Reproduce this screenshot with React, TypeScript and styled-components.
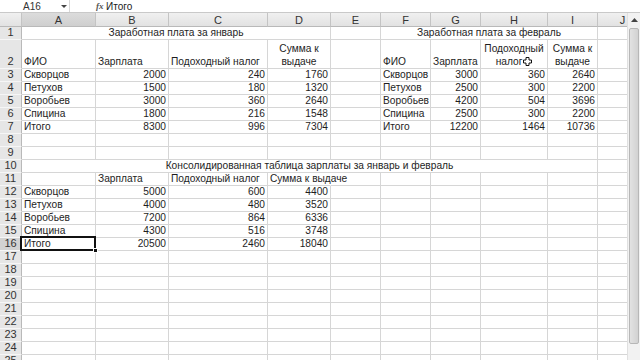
import React from "react";
import styled, { createGlobalStyle, css } from "styled-components";

const Global = createGlobalStyle`
  html, body { margin: 0; padding: 0; background: #fff; }
  body { width: 640px; height: 360px; overflow: hidden; font-family: "Liberation Sans", Arial, sans-serif; }
`;

const COLS = [22, 74, 73, 99, 63, 50, 50, 50, 67, 50, 50];
const LETTERS = ["A", "B", "C", "D", "E", "F", "G", "H", "I", "J"];

type Align = "left" | "right" | "center";
type Cell = { c: number; span?: number; t: string; a?: Align; wrap?: boolean; over?: boolean };

const Window = styled.div`
  width: 640px;
  height: 360px;
  display: flex;
  flex-direction: column;
  overflow: hidden;
  background: #fff;
`;

const FormulaBar = styled.div`
  height: 12px;
  display: flex;
  align-items: center;
  border-bottom: 1px solid #c9c9c9;
  background: #fff;
  font-size: 10px;
  color: #333;
  flex: none;
`;

const NameBox = styled.div`
  width: 70px;
  height: 100%;
  display: flex;
  align-items: center;
  padding-left: 23px;
  box-sizing: border-box;
  position: relative;
  border-right: 1px solid #d8d8d8;
`;

const DropArrow = styled.span`
  position: absolute;
  left: 61px;
  top: 5px;
  width: 0;
  height: 0;
  border-left: 3px solid transparent;
  border-right: 3px solid transparent;
  border-top: 3px solid #444;
`;

const Fx = styled.span`
  margin-left: 26px;
  font-family: "Liberation Serif", serif;
  font-style: italic;
  font-weight: bold;
  font-size: 9px;
  color: #555;
  width: 9px;
`;

const FormulaText = styled.span`
  margin-left: 1px;
  color: #222;
`;

const Body = styled.div`
  flex: 1;
  display: flex;
  min-height: 0;
`;

const Sheet = styled.div`
  flex: 1;
  overflow: hidden;
  display: grid;
  grid-template-columns: ${COLS.map((w) => w + "px").join(" ")};
  grid-template-rows: 14px 13px 29px repeat(23, 13px);
  font-size: 10.2px;
  color: #1e1e1e;
  align-content: start;
`;

const Header = styled.div<{ $sel?: boolean }>`
  background: ${(p) => (p.$sel ? "linear-gradient(#dcdcdc, #cfcfcf)" : "linear-gradient(#f0f0f0, #e2e2e2)")};
  border-right: 1px solid #c4c4c4;
  border-bottom: 1px solid #b9b9b9;
  box-sizing: border-box;
  display: flex;
  align-items: center;
  justify-content: center;
  font-size: 11px;
  color: #333;
  white-space: nowrap;
  overflow: hidden;
`;

const RowHead = styled.div<{ $sel?: boolean }>`
  background: ${(p) => (p.$sel ? "#d2d2d2" : "#e6e6e6")};
  border-right: 1px solid #b9b9b9;
  border-bottom: 1px solid #f6f6f6;
  box-sizing: border-box;
  display: flex;
  align-items: flex-end;
  justify-content: center;
  font-size: 11px;
  line-height: 13px;
  color: #333;
  overflow: hidden;
`;

const Corner = styled(Header)`
  background: linear-gradient(#f0f0f0, #e2e2e2);
`;

const CellBox = styled.div<{ $align: Align; $wrap?: boolean; $over?: boolean; $span: number; $sel?: boolean }>`
  grid-column: span ${(p) => p.$span};
  border-right: 1px solid #d6d6d6;
  border-bottom: 1px solid #d6d6d6;
  box-sizing: border-box;
  display: flex;
  align-items: flex-end;
  justify-content: ${(p) => (p.$align === "right" ? "flex-end" : p.$align === "center" ? "center" : "flex-start")};
  text-align: ${(p) => p.$align};
  padding: 0 2px 0 2px;
  line-height: 13px;
  white-space: ${(p) => (p.$wrap ? "normal" : "nowrap")};
  overflow: ${(p) => (p.$over || p.$sel ? "visible" : "hidden")};
  position: relative;
  z-index: ${(p) => (p.$sel ? 2 : p.$over ? 1 : 0)};
  ${(p) =>
    p.$over &&
    css`
      border-right-color: transparent;
    `}
`;

const Selection = styled.div`
  position: absolute;
  left: -2px;
  top: -2px;
  right: -1px;
  bottom: -1px;
  border: 2px solid #111;
  pointer-events: none;
`;

const Handle = styled.div`
  position: absolute;
  right: -4px;
  bottom: -4px;
  width: 5px;
  height: 5px;
  background: #111;
  border: 1px solid #fff;
  box-sizing: border-box;
`;

const Cursor = styled.span`
  display: inline-block;
  width: 9px;
  height: 9px;
  margin-left: 1px;
  position: relative;
  vertical-align: -1px;
`;

const Scrollbar = styled.div`
  width: 12px;
  flex: none;
  display: flex;
  flex-direction: column;
  background: #f2f2f2;
  border-left: 1px solid #e0e0e0;
`;

const ScrollArrow = styled.div`
  height: 14px;
  display: flex;
  align-items: center;
  justify-content: center;
  flex: none;
`;

const Thumb = styled.div`
  height: 314px;
  margin: 1px 1px 0 1px;
  background: linear-gradient(90deg, #e2e2e2, #d2d2d2);
  border: 1px solid #b7b7b7;
  border-radius: 2px;
  flex: none;
`;

const rows: Cell[][] = [
  [{ c: 0, span: 4, t: "Заработная плата за январь", a: "center" }, { c: 4, t: "" }, { c: 5, span: 4, t: "Заработная плата за февраль", a: "center" }, { c: 9, t: "" }],
  [
    { c: 0, t: "ФИО" },
    { c: 1, t: "Зарплата" },
    { c: 2, t: "Подоходный налог" },
    { c: 3, t: "Сумма к выдаче", a: "center", wrap: true },
    { c: 4, t: "" },
    { c: 5, t: "ФИО" },
    { c: 6, t: "Зарплата" },
    { c: 7, t: "Подоходный налог", a: "center", wrap: true },
    { c: 8, t: "Сумма к выдаче", a: "center", wrap: true },
    { c: 9, t: "" },
  ],
];

const jan = [
  ["Скворцов", "2000", "240", "1760"],
  ["Петухов", "1500", "180", "1320"],
  ["Воробьев", "3000", "360", "2640"],
  ["Спицина", "1800", "216", "1548"],
  ["Итого", "8300", "996", "7304"],
];
const feb = [
  ["Скворцов", "3000", "360", "2640"],
  ["Петухов", "2500", "300", "2200"],
  ["Воробьев", "4200", "504", "3696"],
  ["Спицина", "2500", "300", "2200"],
  ["Итого", "12200", "1464", "10736"],
];
const cons = [
  ["Скворцов", "5000", "600", "4400"],
  ["Петухов", "4000", "480", "3520"],
  ["Воробьев", "7200", "864", "6336"],
  ["Спицина", "4300", "516", "3748"],
  ["Итого", "20500", "2460", "18040"],
];

const quad = (r: string[], start: number): Cell[] => [
  { c: start, t: r[0] },
  { c: start + 1, t: r[1], a: "right" },
  { c: start + 2, t: r[2], a: "right" },
  { c: start + 3, t: r[3], a: "right" },
];

const empty = (from: number, to: number): Cell[] => {
  const out: Cell[] = [];
  for (let i = from; i <= to; i++) out.push({ c: i, t: "" });
  return out;
};

jan.forEach((r, i) => rows.push([...quad(r, 0), { c: 4, t: "" }, ...quad(feb[i], 5), { c: 9, t: "" }]));
rows.push(empty(0, 9));
rows.push(empty(0, 9));
rows.push([{ c: 0, span: 9, t: "Консолидированная таблица зарплаты за январь и февраль", a: "center" }, { c: 9, t: "" }]);
rows.push([{ c: 0, t: "" }, { c: 1, t: "Зарплата" }, { c: 2, t: "Подоходный налог" }, { c: 3, t: "Сумма к выдаче", over: true }, ...empty(4, 9)]);
cons.forEach((r) => rows.push([...quad(r, 0), ...empty(4, 9)]));
for (let i = 0; i < 9; i++) rows.push(empty(0, 9));

const SEL_ROW = 16;

const CursorIcon = () => (
  <Cursor>
    <svg width="9" height="9" viewBox="0 0 9 9">
      <path d="M3 0.5h3v2.5h2.5v3h-2.5v2.5h-3v-2.5h-2.5v-3h2.5z" fill="#fff" stroke="#111" strokeWidth="1" />
    </svg>
  </Cursor>
);

export default function App() {
  return (
    <Window>
      <Global />
      <FormulaBar>
        <NameBox>
          A16
          <DropArrow />
        </NameBox>
        <Fx>fx</Fx>
        <FormulaText>Итого</FormulaText>
      </FormulaBar>
      <Body>
        <Sheet>
          <Corner />
          {LETTERS.map((l, i) => (
            <Header key={l} $sel={i === 0}>
              {l}
            </Header>
          ))}
          {rows.map((row, ri) => {
            const n = ri + 1;
            return (
              <React.Fragment key={n}>
                <RowHead $sel={n === SEL_ROW}>{n}</RowHead>
                {row.map((cell) => {
                  const sel = n === SEL_ROW && cell.c === 0;
                  return (
                    <CellBox
                      key={cell.c}
                      $align={cell.a || "left"}
                      $wrap={cell.wrap}
                      $over={cell.over}
                      $sel={sel}
                      $span={cell.span || 1}
                    >
                      {cell.wrap && cell.t === "Подоходный налог" ? (
                        <span>
                          Подоходный
                          <br />
                          налог
                          <CursorIcon />
                        </span>
                      ) : cell.wrap && cell.t === "Сумма к выдаче" ? (
                        <span>
                          Сумма к
                          <br />
                          выдаче
                        </span>
                      ) : (
                        cell.t
                      )}
                      {sel && (
                        <Selection>
                          <Handle />
                        </Selection>
                      )}
                    </CellBox>
                  );
                })}
              </React.Fragment>
            );
          })}
        </Sheet>
        <Scrollbar>
          <ScrollArrow>
            <svg width="7" height="4" viewBox="0 0 7 4">
              <path d="M0 4L3.5 0L7 4z" fill="#444" />
            </svg>
          </ScrollArrow>
          <Thumb />
        </Scrollbar>
      </Body>
    </Window>
  );
}
